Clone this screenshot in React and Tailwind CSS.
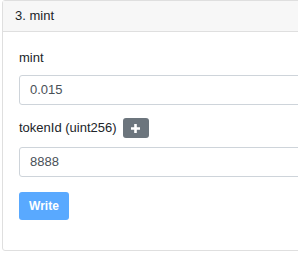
export default function App() {
  return (
    <div className="w-[298px] h-[253px] bg-white overflow-hidden" style={{ fontFamily: '"Liberation Sans", Arial, sans-serif' }}>
      <div className="ml-[2px] w-[320px] h-[251px] border border-[#dfdfdf] rounded-[3px] flex flex-col">
        <div className="h-[31px] bg-[#f7f7f7] border-b border-[#dfdfdf] pl-[12px] flex items-center text-[13px] text-[#212529]">
          3. mint
        </div>
        <div className="px-[16px] pt-[16px] flex flex-col">
          <div className="text-[13px] leading-[20px] text-[#212529] h-[20px] flex items-center">mint</div>
          <div className="mt-[7px] h-[30px] border border-[#ced4da] rounded-[3px] pl-[10px] flex items-center text-[13px] text-[#495057]">
            0.015
          </div>
          <div className="mt-[13px] h-[20px] flex items-center gap-[6px]">
            <span className="text-[13px] text-[#212529]">tokenId (uint256)</span>
            <div className="w-[26px] h-[20px] bg-[#6c757d] rounded-[3px] flex items-center justify-center">
              <svg width="11" height="11" viewBox="0 0 11 11">
                <path d="M5.5 1 V10 M1 5.5 H10" stroke="white" strokeWidth="2.6" />
              </svg>
            </div>
          </div>
          <div className="mt-[9px] h-[30px] border border-[#ced4da] rounded-[3px] pl-[10px] flex items-center text-[13px] text-[#495057]">
            8888
          </div>
          <div className="mt-[15px] w-[50px] h-[28px] bg-[#59a9ff] rounded-[3px] flex items-center justify-center text-[12px] font-bold text-white">
            Write
          </div>
        </div>
      </div>
    </div>
  );
}
